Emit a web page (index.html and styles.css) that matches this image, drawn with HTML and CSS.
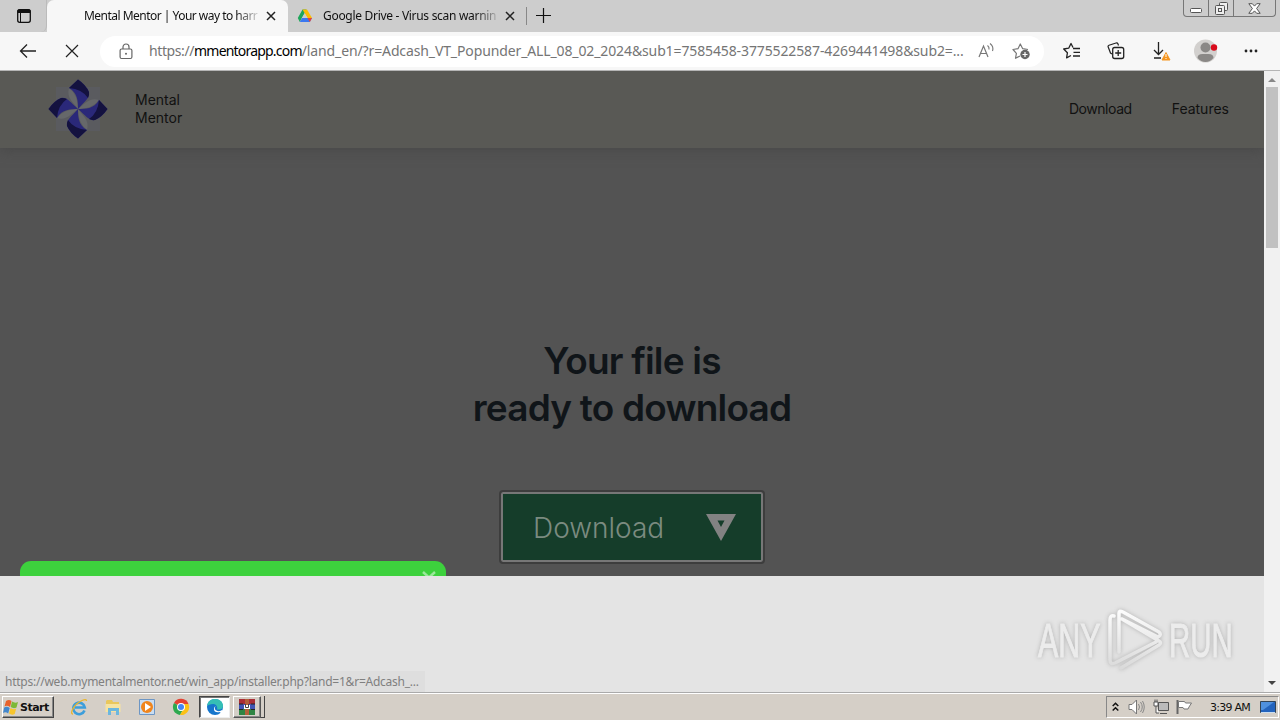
FILE: index.html
```html
<!doctype html>
<html lang="en">
<head>
    <meta charset="utf-8">
    <title>Mental Mentor | Your way to harmony</title>
    <link rel="stylesheet" href="styles.css">
</head>
<body>
<div class="tabbar">
    <div class="tab-actions">
        <svg width="16" height="16" viewBox="0 0 16 16"><rect x="1.7" y="1.7" width="12.6" height="12.6" rx="2" fill="none" stroke="#111" stroke-width="1.3"/><path d="M2 2h12v2.500H2z" stroke="#111" fill="#111"/><path d="M4.500 5v9" stroke="#111"/></svg>
    </div>
    <div class="tab active">
        <span class="tab-title first">Mental Mentor | Your way to harr</span>
        <svg class="close" width="10" height="10" viewBox="0 0 10 10"><path d="M1 1l8 8M9 1L1 9" stroke="#222" stroke-width="1.5"/></svg>
    </div>
    <div class="tab">
        <svg class="drive" width="16" height="16" viewBox="0 0 16 16"><path d="M5.500 1.500h4L4.500 10.500 2.800 14 .8 10z" fill="#1ea65a"/><path d="M5.500 1.500h4.500l5 8.500h-4.500z" fill="#fbbc04"/><path d="M5 10h10l-2.200 4H2.800z" fill="#3c78f0"/><path d="M7.800 5.500L5.200 10h5.300z" fill="#cdcdcd"/><path d="M10.500 10H15l-2.200 4z" fill="#ea4335"/></svg>
        <span class="tab-title second">Google Drive - Virus scan warnin</span>
        <svg class="close" width="10" height="10" viewBox="0 0 10 10"><path d="M1 1l8 8M9 1L1 9" stroke="#222" stroke-width="1.5"/></svg>
    </div>
    <svg class="new-tab" width="15" height="15" viewBox="0 0 15 15"><path d="M7.500 0v15M0 7.500h15" stroke="#111" stroke-width="1.200"/></svg>
    <div class="window-buttons">
        <span class="wb"><svg width="12" height="5" viewBox="0 0 12 5"><rect x=".5" y=".5" width="11" height="4" rx="1" fill="#fff" stroke="#555"/></svg></span>
        <span class="wb"><svg width="13" height="13" viewBox="0 0 13 13"><g fill="#eee" stroke="#555"><rect x="4.500" y=".5" width="8" height="8" rx="1"/><rect x=".5" y="3.500" width="9" height="9" rx="1"/><rect x="3.500" y="6.500" width="3" height="3"/></g></svg></span>
        <span class="wb wide"><svg width="13" height="11" viewBox="0 0 13 11"><path d="M.8.7h3.500l2.200 2.400L8.700.7h3.500L8.600 5.500l3.600 4.800H8.700L6.500 7.900l-2.200 2.400H.8l3.600-4.800z" fill="#fff" stroke="#555"/></svg></span>
    </div>
</div>

<div class="toolbar">
    <svg class="back" width="18" height="16" viewBox="0 0 18 16"><path d="M1.500 8H17M8 1.500L1.500 8 8 14.500" fill="none" stroke="#222" stroke-width="1.300"/></svg>
    <svg class="stop" width="14" height="14" viewBox="0 0 14 14"><path d="M1 1l12 12M13 1L1 13" stroke="#222" stroke-width="1.200"/></svg>
    <div class="address">
        <svg class="lock" width="14" height="17" viewBox="0 0 14 17"><path d="M4 6V4a3 3 0 0 1 6 0v2" fill="none" stroke="#666" stroke-width="1.200"/><rect x="1.100" y="6" width="11.800" height="9.500" rx="1.500" fill="none" stroke="#666" stroke-width="1.200"/><circle cx="7" cy="10.700" r="1" fill="#666"/></svg>
        <span class="url"><span class="scheme">https://</span><b>mmentorapp.com</b><span class="path">/land_en/?r=Adcash_VT_Popunder_ALL_08_02_2024&amp;sub1=7585458-3775522587-4269441498&amp;sub2=...</span></span>
        <svg class="read" width="18" height="17" viewBox="0 0 18 17"><path d="M1 15L5.500 4 10 15M2.700 11.500h5.600" fill="none" stroke="#777" stroke-width="1.200"/><path d="M9.500 3.500q2 1.500 1.500 4M12 1.500q4 3 2.500 7.500" fill="none" stroke="#777" stroke-width="1.100"/></svg>
        <svg class="fav-add" width="19" height="18" viewBox="0 0 19 18"><path d="M8 14l-4.500 2.300.9-5L1 7.500l5-.8L8.300 2l2.400 4.700 5.300.8" fill="none" stroke="#777" stroke-width="1.200" stroke-linejoin="round"/><circle cx="13" cy="12.500" r="4.700" fill="#666"/><path d="M13 10v5M10.500 12.500h5" stroke="#fff" stroke-width="1.200"/></svg>
    </div>
    <div class="tools">
        <svg width="18" height="18" viewBox="0 0 18 18"><path d="M10 5.500L8 1.500 5.700 6.200l-5 .8 3.700 3.800-.8 5L8 13.500M10 6.500h7M10.500 10.300H17M10 14h7" fill="none" stroke="#222" stroke-width="1.300" stroke-linejoin="round"/></svg>
        <svg width="18" height="18" viewBox="0 0 18 18"><path d="M5 12L3.500 11 1.200 5q-.5-1.300.8-1.800l7-2.200q1.500-.3 2 1l.5 1.500" fill="none" stroke="#222" stroke-width="1.200"/><rect x="5.700" y="5.500" width="11" height="11" rx="2" fill="#f7f7f7" stroke="#222" stroke-width="1.300"/><path d="M11.200 8v6M8.200 11h6" stroke="#222" stroke-width="1.300"/></svg>
        <svg class="down" width="20" height="20" viewBox="0 0 20 20"><path d="M7.500 1v12M3 9l4.500 4.500L12 9M3 17h7" fill="none" stroke="#222" stroke-width="1.300"/><path d="M15 11.500l4 7.500h-8z" fill="#f5951f" stroke="#f5951f" stroke-linejoin="round"/><path d="M15 13v3M15 17v1" stroke="#fff"/></svg>
        <svg class="avatar" width="24" height="24" viewBox="0 0 24 24"><circle cx="11.500" cy="12" r="11.500" fill="#d2d0ce"/><circle cx="11.500" cy="8.500" r="5" fill="#8a8886"/><path d="M3.500 19q0-4 5-4h6q5 0 5 4-3.500 4-8 4t-8-4z" fill="#8a8886"/><circle cx="20" cy="8.500" r="3.200" fill="#d90b1c"/></svg>
        <svg class="more" width="14" height="4" viewBox="0 0 14 4"><g fill="#222"><circle cx="2" cy="2" r="1.400"/><circle cx="7" cy="2" r="1.400"/><circle cx="12" cy="2" r="1.400"/></g></svg>
    </div>
</div>

<div class="viewport">
    <div class="page">
        <div class="shade">
            <header>
                <svg class="logo" width="62" height="62" viewBox="-31 -31 62 62">
                    <path d="M-22-22h44v44h-44z" fill="#5a5b5f"/>
                    <defs>
                        <path id="leaf" d="M0 0C-4-6-12-11-9-21Q0-14 0 0z" fill="#66686a"/>
                        <g id="petal">
                            <path d="M0 0C0-7 0-16-9-21L0-29.500Q8-24 11-17C12-11 7-8 0 0z" fill="#2a2879"/>
                            <path d="M-9-21L0-29.500Q8-24 11-17 11.500-14 10-11Q4-20-9-21z" fill="#14123f"/>
                        </g>
                    </defs>
                    <use href="#leaf"/>
                    <use href="#leaf" transform="rotate(90)"/>
                    <use href="#leaf" transform="rotate(180)"/>
                    <use href="#leaf" transform="rotate(270)"/>
                    <use href="#petal"/>
                    <use href="#petal" transform="rotate(90)"/>
                    <use href="#petal" transform="rotate(180)"/>
                    <use href="#petal" transform="rotate(270)"/>
                </svg>
                <span class="brand">Mental<br>Mentor</span>
                <nav>
                    <span class="nav-download">Download</span>
                    <span class="nav-features">Features</span>
                </nav>
            </header>
            <h1><span class="line1">Your file is</span><br><span class="line2">ready to download</span></h1>
            <div class="download">
                <span>Download</span>
                <svg width="30" height="27" viewBox="0 0 30 27"><path d="M0 0h30L15 27zM11.500 6.500L15 13l3.500-6.500z" fill="#828282" fill-rule="evenodd"/></svg>
            </div>
            <div class="notice">
                <svg width="14" height="12" viewBox="0 0 14 12"><path d="M1 1l6 5.500L13 1M1 12l6-5.500 6 5.500" fill="none" stroke="#9be89b" stroke-width="2.500"/></svg>
            </div>
        </div>
        <div class="watermark">
            <span class="any">ANY</span>
            <svg width="58" height="64" viewBox="0 0 58 64">
                <defs>
                    <linearGradient id="shine" x1="0" y1="0" x2="0" y2="1"><stop offset="0" stop-color="#fcfcfc"/><stop offset="1" stop-color="#dadada"/></linearGradient>
                </defs>
                <path d="M8 8Q4 7 4 12v40q0 5 5 3L50 34M13 44V5q0-3 4-1l36 20q3 3-1 5L16 11M15 60l38-23q3-2 0-4L16 11" fill="none" stroke="url(#shine)" stroke-width="3.500" stroke-linejoin="round" stroke-linecap="round"/>
            </svg>
            <span class="run">RUN</span>
        </div>
        <div class="status"><span>https://web.mymentalmentor.net/win_app/installer.php?land=1&amp;r=Adcash_...</span></div>
    </div>
    <div class="scrollbar">
        <svg width="8" height="4" viewBox="0 0 8 4"><path d="M0 4l4-4 4 4z" fill="#888"/></svg>
        <div class="thumb"></div>
        <svg class="arrow-down" width="8" height="4" viewBox="0 0 8 4"><path d="M0 0l4 4 4-4z" fill="#444"/></svg>
    </div>
</div>

<div class="taskbar">
    <div class="start">
        <svg width="16" height="16" viewBox="0 0 16 16"><path d="M3 2q3-2 5.500 0L7 8Q4 6 1.500 7.500z" fill="#e8622c"/><path d="M9 2.500q3 2 6 .5l-1.500 5.500Q10.500 10 7.700 8z" fill="#7db938"/><path d="M1.200 8.500Q4 7 6.700 9l-1.500 5.500Q2.500 12.500 0 14z" fill="#4387cc"/><path d="M7.500 9q3 2 5.700.5L11.700 15q-3 1.500-5.700-.5z" fill="#f7c52d"/></svg>
        <span>Start</span>
    </div>
    <div class="quick">
        <svg width="18" height="18" viewBox="0 0 18 18"><path d="M14.500 12.500a5.800 5.800 0 1 1 .3-3H5" fill="none" stroke="#3c9edb" stroke-width="2.600"/><path d="M3 16C-1 16 4 6 12 2.500q4.500-2 4.500.5" fill="none" stroke="#e9b52e" stroke-width="1.300"/></svg>
        <svg width="18" height="18" viewBox="0 0 18 18"><path d="M2 3l1-1h5l1 2h6v4H2z" fill="#e9c75c"/><path d="M1.500 6h15v8h-15z" fill="#f6e3a0"/><path d="M4 10h11v7h-3v-4H7v4H4z" fill="#6cb7de"/></svg>
        <svg width="18" height="18" viewBox="0 0 18 18"><path d="M1.500 1.500h15v15h-15z" fill="#c9ddf1" stroke="#6d96c4"/><circle cx="9" cy="9" r="6" fill="#f0851c"/><path d="M7 5l6 4-6 4z" fill="#fff"/></svg>
        <svg width="18" height="18" viewBox="0 0 18 18"><path d="M9 9L2 5a8 8 0 0 1 14.500 1z" fill="#e34133"/><path d="M9 9L2 5a8 8 0 0 0 6 12l4-7z" fill="#2da94f"/><path d="M9 6h7.500A8 8 0 0 1 8 17l4-7z" fill="#fbc116"/><circle cx="9" cy="9" r="4" fill="#fff"/><circle cx="9" cy="9" r="3" fill="#4285f4"/></svg>
    </div>
    <div class="task pressed">
        <svg width="18" height="18" viewBox="0 0 18 18"><circle cx="9" cy="9" r="8" fill="#1676cc"/><path d="M1 8C2 2 6 1 9 1c5 0 8 3 8 7 0 3-3 4-6 3.500 1-3-1-5.500-4-5.500S2 7 1 8z" fill="#35bfb5"/><path d="M9.500 8q-2 4 2 5 3 .5 4.500-1l1 1.500-2 2-1-1.500q-6 1-6-3 0-2 1.500-3z" fill="#fff"/></svg>
    </div>
    <div class="task winrar">
        <svg width="18" height="18" viewBox="0 0 18 18"><path d="M1 1h16v5H1z" fill="#a92d36"/><path d="M1 6h16v5H1z" fill="#4054b4"/><path d="M1 11h16v6H1z" fill="#2e8443"/><path d="M7 1h4v16H7z" fill="#b3603a"/><path d="M6 7h6v4H6z" fill="#fff"/><path d="M7.500 6v3.500h3V6" fill="none" stroke="#444"/><path d="M1 6h4M13 6h4M1 11.500h4M13 11.500h4" stroke="#222"/></svg>
    </div>
    <div class="task-edge"></div>
    <div class="tray">
        <svg class="chevrons" width="7" height="10" viewBox="0 0 7 10"><path d="M.7 4L3.500 1.200 6.300 4M.7 8.500l2.800-2.800 2.800 2.800" fill="none" stroke="#111" stroke-width="1.500"/></svg>
        <svg class="sound" width="17" height="16" viewBox="0 0 17 16"><path d="M1 5.500h3L8.500 1v14L4 10.500H1z" fill="#fff" stroke="#777"/><path d="M10.500 5q2 3 0 6M12.500 3q3.500 5 0 10M14.500 2q3.500 6 0 12" fill="none" stroke="#888"/></svg>
        <svg class="network" width="16" height="16" viewBox="0 0 16 16"><path d="M5.500 3.500h10v8h-10zM7 14.500h7" fill="#bbb" stroke="#555"/><path d="M1 3h4v4H1zM2 .5V3M4 .5V3M3 7v7h3" fill="#fff" stroke="#555"/></svg>
        <svg class="flag" width="17" height="16" viewBox="0 0 17 16"><path d="M1.500 1v14" stroke="#666" stroke-width="2"/><path d="M2.500 2.500h6l1 1.500h6L13 8l-1 2H8L7 8.500H2.500z" fill="#fff" stroke="#777"/></svg>
        <span class="clock">3:39 AM</span>
        <svg class="desktop" width="16" height="13" viewBox="0 0 16 13"><path d="M.5.500h15v11H.500z" fill="#2464bd" stroke="#345"/><path d="M1 1h13L3 9H1z" fill="#4f91df"/><path d="M1 11.500h14" stroke="#cde"/></svg>
    </div>
</div>
</body>
</html>
```
FILE: styles.css
```css
* { box-sizing: border-box; }
body {
    margin: 0;
    width: 1280px;
    height: 720px;
    overflow: hidden;
    display: flex;
    flex-direction: column;
    font-family: "Noto Sans", sans-serif;
    color: #111;
}
svg { display: block; flex: none; }
span { white-space: nowrap; }

.tabbar {
    display: flex;
    align-items: stretch;
    height: 32px;
    background: #cdcdcd;
}
.tab-actions {
    width: 47px;
    padding: 8px 0 0 16px;
    border-bottom-right-radius: 6px;
    border-right: 1px solid #bbb;
}
.tab {
    display: flex;
    align-items: center;
    width: 239px;
    height: 18px;
    margin-top: 7px;
    padding-left: 10px;
    border-right: 1px solid #888;
}
.tab.active {
    width: 241px;
    height: 32px;
    margin-top: 0;
    padding-left: 37px;
    background: #f7f7f7;
    border: 0;
    border-radius: 7px 7px 0 0;
}
.drive { margin-left: -1px; margin-right: 10px; }
.tab-title {
    width: 174px;
    font-size: 12px;
    line-height: 18px;
    -webkit-mask-image: linear-gradient(90deg, #000 152px, transparent 178px);
}
.first { letter-spacing: -.52px; }
.second { letter-spacing: -.3px; }
.close { margin-left: 8px; }
.new-tab { margin: 8px 0 0 9px; }
.window-buttons {
    display: flex;
    margin-left: auto;
    margin-right: 4px;
    height: 17px;
    border: 1px solid #777;
    border-top: 0;
    border-radius: 0 0 4px 4px;
}
.wb {
    display: flex;
    justify-content: center;
    align-items: center;
    width: 25px;
    border-right: 1px solid #777;
}
.wb:first-child { padding-top: 4px; }
.wb.wide { width: 41px; border: 0; }

.toolbar {
    display: flex;
    align-items: center;
    height: 39px;
    background: #f7f7f7;
    border-bottom: 1px solid #b5b5b5;
}
.back { margin-left: 19px; }
.stop { margin-left: 28px; }
.address {
    display: flex;
    align-items: center;
    width: 944px;
    height: 31px;
    margin-left: 21px;
    padding-left: 19px;
    border-radius: 16px;
    background: #fff;
}
.url {
    display: flex;
    width: 829px;
    margin-left: 16px;
    font-size: 14px;
    line-height: 20px;
    color: #757575;
}
.url b { font-weight: 400; color: #000; letter-spacing: -.8px; }
.scheme { letter-spacing: -.4px; }
.path { letter-spacing: -.12px; }
.read { margin-top: -2px; }
.fav-add { margin-left: 16px; }
.tools {
    display: flex;
    align-items: center;
    margin-left: 19px;
}
.tools svg + svg { margin-left: 26px; }
.tools svg + .avatar { margin-left: 23px; }

.viewport { display: flex; height: 621px; }
.page {
    position: relative;
    width: 1264px;
    background: #e4e4e4;
}
.shade {
    position: relative;
    display: flex;
    flex-direction: column;
    align-items: center;
    height: 505px;
    background: #535353;
    overflow: hidden;
    font-family: Inter, sans-serif;
}
header {
    display: flex;
    align-items: center;
    width: 100%;
    height: 77px;
    padding-left: 47px;
    padding-bottom: 2px;
    background: #595955;
    box-shadow: 0 2px 12px #484848;
}
.brand {
    margin-left: 26px;
    font-size: 14px;
    line-height: 18px;
}
nav {
    display: flex;
    margin-left: auto;
    padding-right: 35px;
    gap: 40px;
    font-size: 14px;
}
.nav-download { letter-spacing: -.45px; }
h1 {
    margin: 189px 0 0;
    font-size: 37px;
    font-weight: 600;
    line-height: 47px;
    text-align: center;
    color: #101519;
}
.line1, .line2 { letter-spacing: -.8px; }
.download {
    display: flex;
    align-items: center;
    width: 262px;
    height: 70px;
    margin-top: 61px;
    padding-left: 30px;
    background: #153d2a;
    border: 2px solid #777;
    outline: 2px solid #3d3d3d;
    border-radius: 2px;
    font-size: 28px;
    font-weight: 300;
    color: #7b8b80;
}
.download span { width: 173px; padding-top: 2px; }
/* only the top edge of the notice fits above the cut */
.notice {
    position: absolute;
    left: 20px;
    top: 490px;
    width: 426px;
    height: 60px;
    padding: 10px 0 0 402px;
    border-radius: 11px 11px 0 0;
    background: #3dd13d;
}
.watermark {
    position: absolute;
    right: 30px;
    bottom: 20px;
    display: flex;
    align-items: center;
    font-family: "Liberation Sans", sans-serif;
    font-size: 49px;
    line-height: 60px;
    color: #ececec;
    -webkit-text-stroke: 1px #ececec;
    filter: drop-shadow(0 0 2px #b0b0b0);
}
.any, .run { width: 65px; }
.any { transform: scaleX(.62); transform-origin: left; }
.run { transform: scaleX(.6); transform-origin: left; }
.watermark svg { margin: 0 5px 0 3px; }
.status {
    position: absolute;
    left: 0;
    bottom: 0;
    width: 425px;
    height: 21px;
    padding-left: 5px;
    background: #dedede;
    font-size: 12px;
    line-height: 21px;
    letter-spacing: -.24px;
    color: #808080;
}
.scrollbar {
    display: flex;
    flex-direction: column;
    align-items: center;
    width: 16px;
    padding-top: 7px;
    background: #f1f1f1;
}
.thumb {
    width: 12px;
    height: 161px;
    margin-top: 5px;
    background: #c1c1c1;
}
.arrow-down { margin: auto 0 7px; }

.taskbar {
    display: flex;
    align-items: center;
    height: 28px;
    padding-top: 1px;
    background: #d5cfc7;
    border-top: 1px solid #aaa;
    box-shadow: inset 0 1px #fff;
}
.start {
    display: flex;
    align-items: center;
    width: 52px;
    height: 22px;
    margin-left: 2px;
    border: 1px solid #fff;
    border-right: 1px solid #444;
    border-bottom: 1px solid #444;
    box-shadow: inset -1px -1px #888;
    font-family: "DejaVu Sans", sans-serif;
    font-size: 11px;
    font-weight: bold;
    letter-spacing: -.5px;
}
.start span { margin-left: 1px; }
.quick {
    display: flex;
    gap: 16px;
    margin-left: 16px;
}
.task {
    display: flex;
    align-items: center;
    justify-content: center;
    width: 29px;
    height: 22px;
    border: 1px solid #fff;
    border-right-color: #555;
    border-bottom-color: #555;
}
.pressed {
    width: 31px;
    margin-left: 9px;
    background: #fff;
    border-color: #444 #eee #eee #444;
    box-shadow: inset 1px 1px #777;
}
.winrar { width: 28px; margin-left: 3px; box-shadow: inset -1px -1px #888; }
.task-edge {
    width: 4px;
    height: 22px;
    border-right: 1px solid #444;
    border-bottom: 1px solid #444;
}
.tray {
    display: flex;
    align-items: center;
    width: 173px;
    height: 22px;
    margin-left: auto;
    margin-right: 1px;
    padding-left: 5px;
    border: 1px solid #888;
    border-right-color: #fff;
    border-bottom-color: #fff;
}
.sound { margin-left: 9px; }
.network { margin-left: 8px; }
.flag { margin-left: 7px; }
.clock {
    width: 50px;
    margin-left: 17px;
    font-family: "DejaVu Sans", sans-serif;
    font-size: 11px;
    letter-spacing: -.75px;
}
```
